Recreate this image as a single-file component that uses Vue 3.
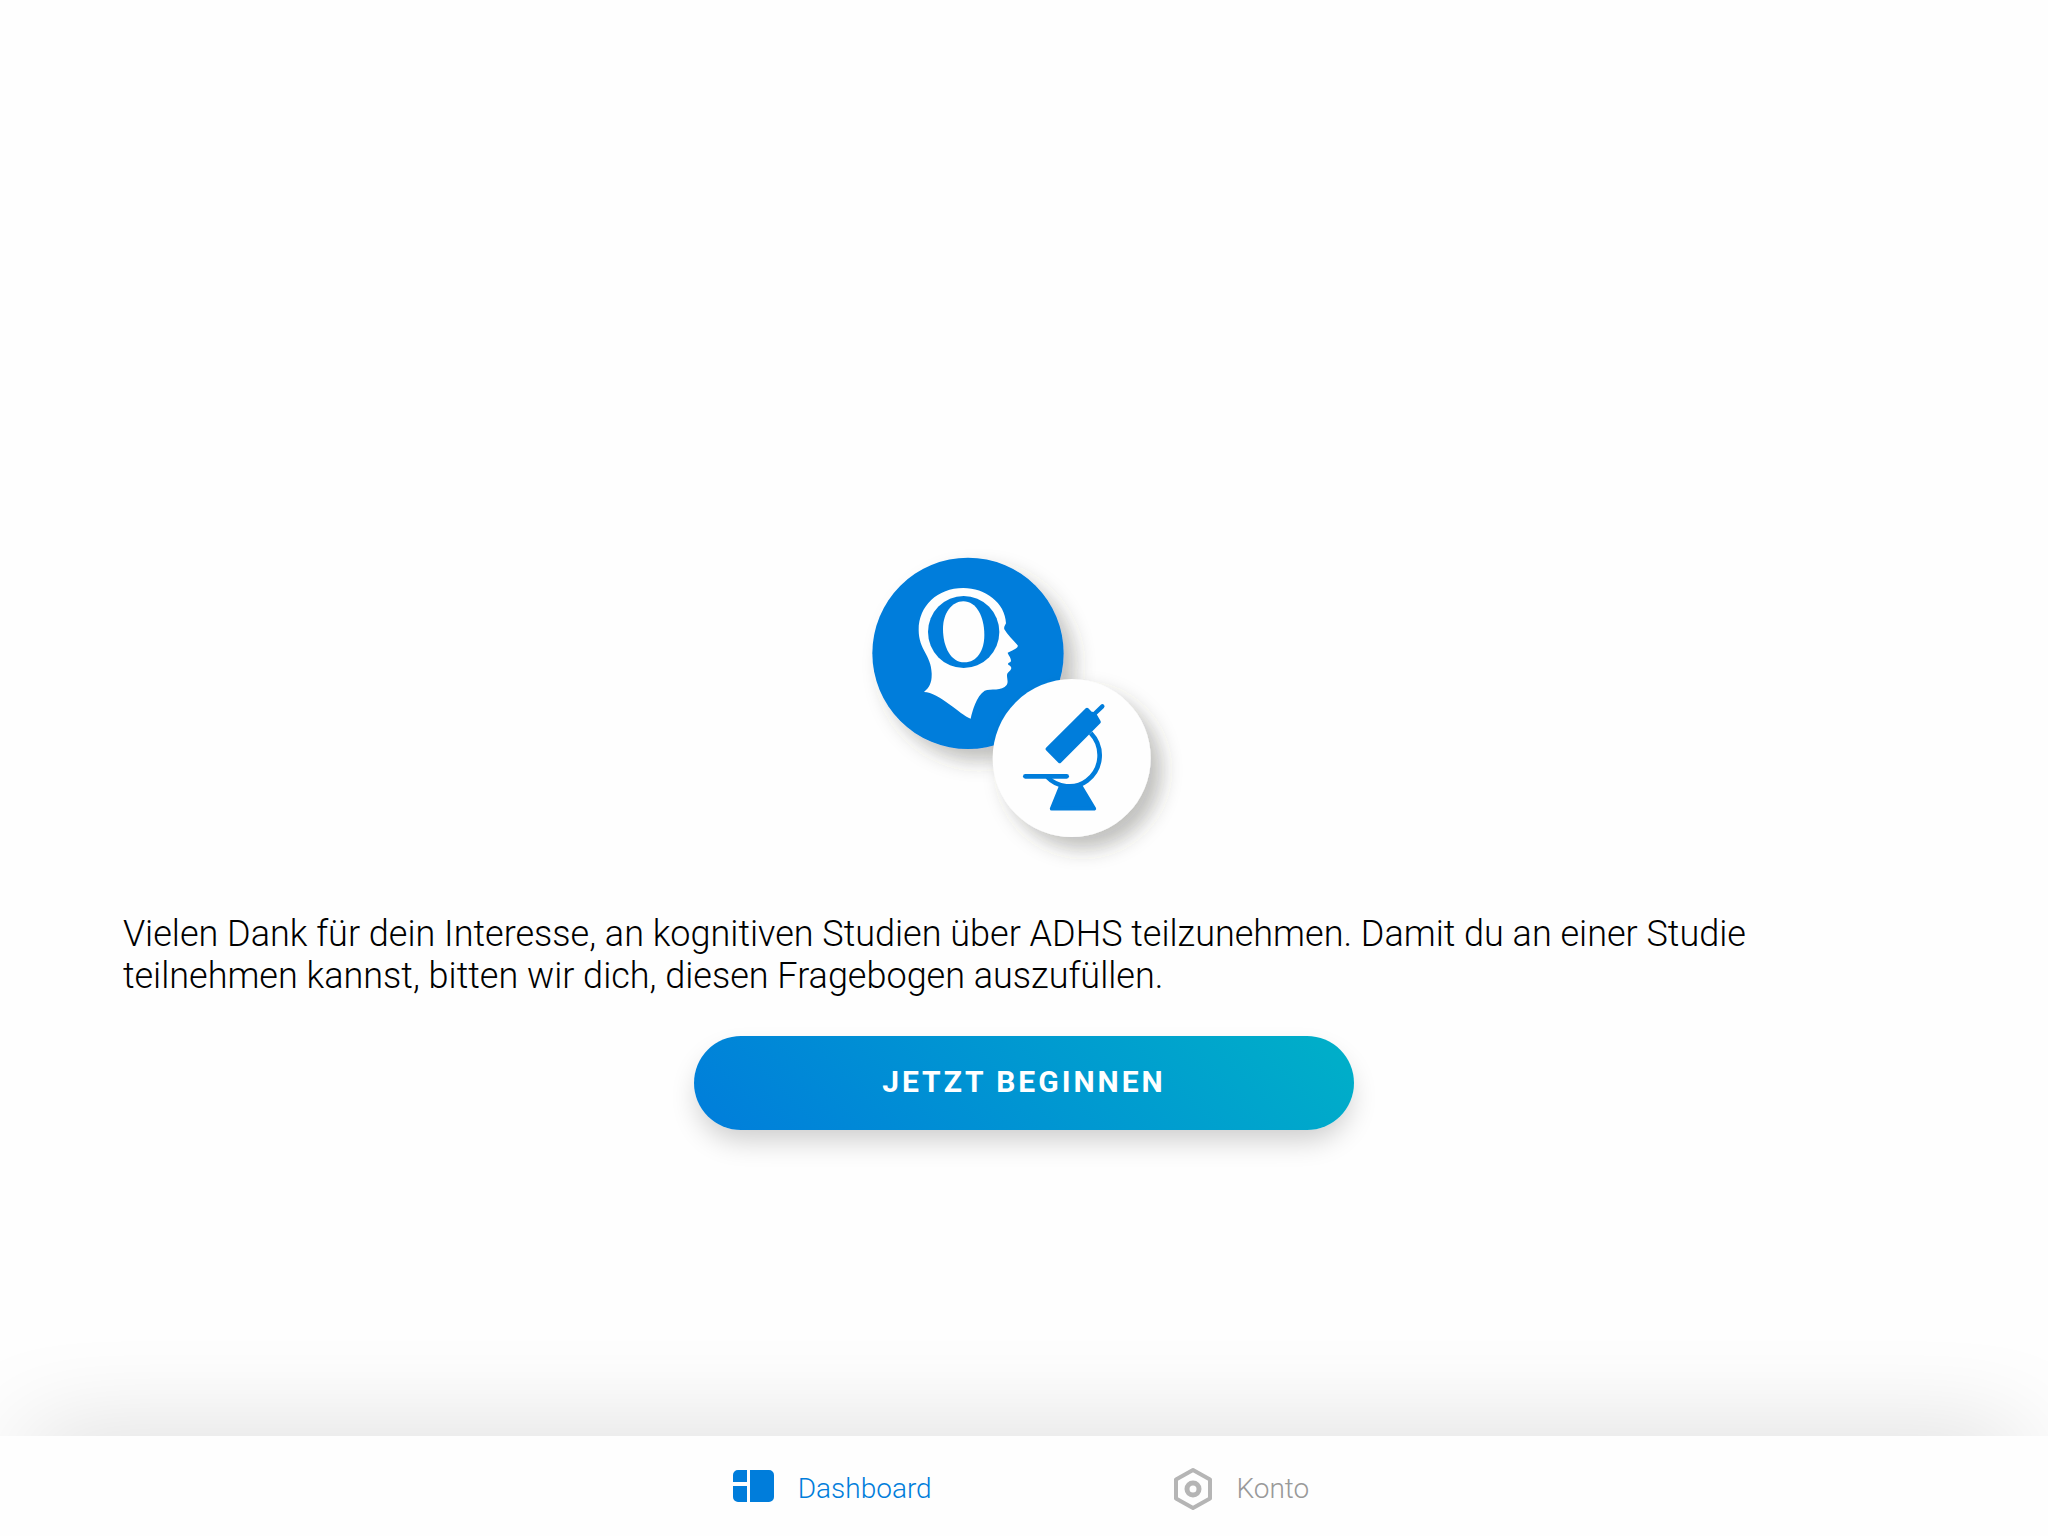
<template>
  <div class="page">
    <main class="content">
      <svg class="illustration" viewBox="12 0 1020 1020" aria-hidden="true">
        <defs>
          <filter id="soft-shadow" x="-30%" y="-30%" width="170%" height="170%">
            <feDropShadow dx="34" dy="36" stdDeviation="29" flood-color="#3c3c37" flood-opacity="0.32" />
          </filter>
        </defs>

        <!-- Head -->
        <circle cx="354" cy="340" r="287" fill="#007ddb" filter="url(#soft-shadow)" />
        <path
          fill="#fefefe"
          d="M222 456C238 443 246 428 245 400C244 345 206 330 206 270C206 198 262 144 340 144C405 144 466 188 468 250C465 257 461 260 463 268C472 284 489 300 503 316C505 322 498 326 473 338C475 346 482 350 483 362C482 368 474 367 474 372C475 377 483 376 484 384C482 396 471 394 471 408C472 422 475 427 470 435C456 455 422 445 404 452C379 468 367 513 362 536C330 525 267 456 222 456Z"
        />
        <ellipse cx="341" cy="276" rx="107" ry="108" fill="#007ddb" />
        <path fill="#fefefe" d="M340 184C379 184 403 230 403 285C403 332 381 367 343 367C303 367 279 322 279 266C279 221 305 184 340 184Z" />

        <!-- Microscope -->
        <circle cx="665" cy="654" r="237" fill="#fefefe" filter="url(#soft-shadow)" />
        <g fill="#007ddb" stroke="#007ddb" stroke-linejoin="round" stroke-linecap="round">
          <path d="M711 509L722 520L733 522L747 546L629 664L592 627Z" stroke-width="11" />
          <path d="M733 522L757 499" fill="none" stroke-width="13" />
          <path d="M722 579C761 620 758 686 711 722C674 750 621 742 592 711" fill="none" stroke-width="14" stroke-linecap="butt" />
          <path d="M526 709H650" fill="none" stroke-width="14" />
          <path d="M632 739H693L733 806H605Z" stroke-width="11" />
        </g>
      </svg>

      <p class="intro">
        Vielen Dank für dein Interesse, an kognitiven Studien über ADHS teilzunehmen. Damit du an einer Studie teilnehmen kannst, bitten wir dich, diesen Fragebogen auszufüllen.
      </p>

      <button type="button" class="start-button">Jetzt beginnen</button>
    </main>

    <nav class="tabbar">
      <a
        v-for="tab in tabs"
        :key="tab.id"
        :href="'#' + tab.id"
        class="tab"
        :class="{ active: activeTab === tab.id }"
        @click="activeTab = tab.id"
      >
        <svg v-if="tab.id === 'dashboard'" class="icon-dashboard" viewBox="0 0 41 32" aria-hidden="true">
          <path d="M5 0H14V12H0V5A5 5 0 0 1 5 0ZM0 16H14V32H5A5 5 0 0 1 0 27ZM17 0H36A5 5 0 0 1 41 5V27A5 5 0 0 1 36 32H17Z" fill="currentColor" />
        </svg>
        <svg v-else class="icon-account" viewBox="0 0 38 44" aria-hidden="true">
          <g fill="none" stroke="#b5b5b5" stroke-width="4" stroke-linejoin="round">
            <path d="M19 3L36 12.500V31.500L19 41L2 31.500V12.500Z" />
            <circle cx="19" cy="22" r="6" stroke-width="5" />
          </g>
        </svg>
        <span>{{ tab.label }}</span>
      </a>
    </nav>
  </div>
</template>

<script setup>
import { ref } from 'vue'

const activeTab = ref('dashboard')

const tabs = [
  { id: 'dashboard', label: 'Dashboard' },
  { id: 'konto', label: 'Konto' },
]
</script>

<style>
body {
  margin: 0;
  background: #fefefe;
}
</style>

<style scoped>
.page {
  min-height: 100vh;
  display: flex;
  flex-direction: column;
  overflow: hidden;
  font-family: Roboto, sans-serif;
  font-weight: 300;
}

.content {
  flex: 1;
  display: flex;
  flex-direction: column;
  align-items: center;
  justify-content: center;
  padding: 234px 6% 0;
}

.illustration {
  width: 340px;
  height: 340px;
  margin-bottom: 33px;
}

.intro {
  width: 100%;
  margin: 0 0 39px;
  font-size: 36px;
  line-height: 42px;
  color: #000;
}

.start-button {
  width: 660px;
  max-width: 100%;
  height: 94px;
  padding: 0 0 4px;
  border: 0;
  border-radius: 47px;
  background: linear-gradient(45deg, #007ddb, #00b0c8);
  box-shadow: 0 14px 28px -4px rgba(0, 0, 0, 0.2);
  color: #fff;
  font-family: inherit;
  font-size: 30px;
  font-weight: 700;
  letter-spacing: 3px;
  text-transform: uppercase;
  cursor: pointer;
}

.tabbar {
  display: flex;
  justify-content: center;
  height: 100px;
  background: #fefefe;
  box-shadow: 0 -20px 100px -30px rgba(0, 0, 0, 0.25);
}

.tab {
  width: 20%;
  display: flex;
  align-items: center;
  justify-content: center;
  gap: 24px;
  padding: 6px 0 0 26px;
  box-sizing: border-box;
  color: #999;
  font-size: 28px;
  line-height: 32px;
  text-decoration: none;
}

.tab.active {
  color: #007ddb;
}

.icon-dashboard {
  width: 41px;
  height: 32px;
  margin-bottom: 6px;
}

.icon-account {
  width: 38px;
  height: 44px;
}
</style>
